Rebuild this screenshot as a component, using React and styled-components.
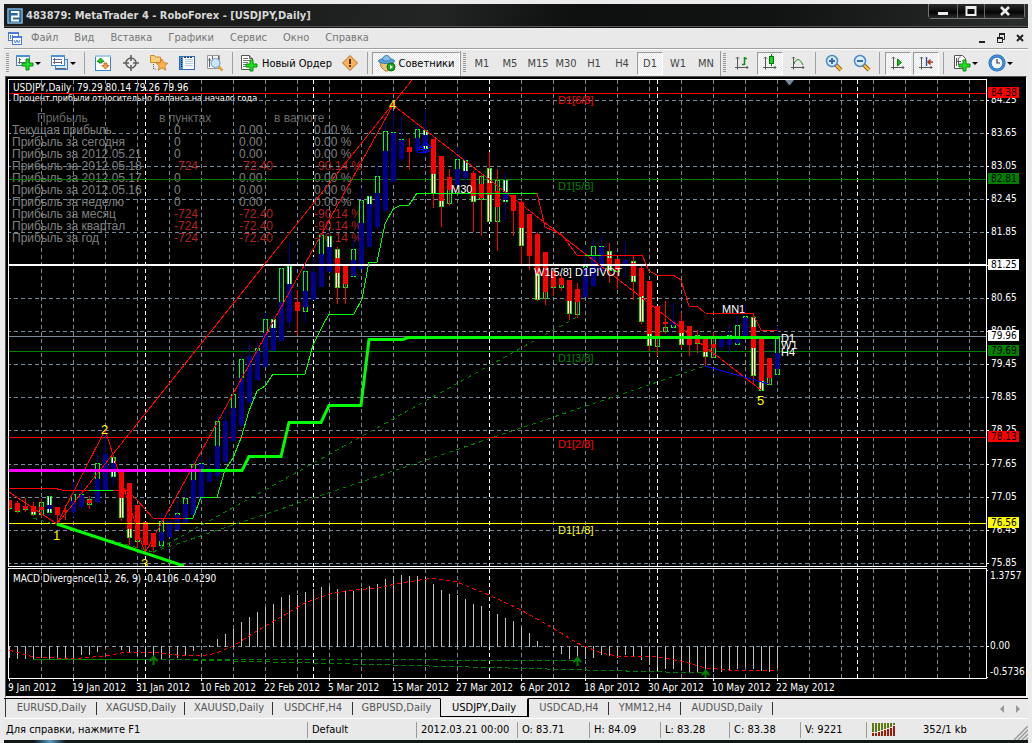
import React from 'react';
import styled, { createGlobalStyle } from 'styled-components';

const UI_FONT = "'DejaVu Sans Condensed', 'DejaVu Sans', sans-serif";
const LABEL_FONT = "'Liberation Sans', sans-serif";

// bar: [candle kind, candle top, candle bottom, trend, body top, body bottom, wick top, wick bottom]
// kind: h hollow, w white, - none; trend: r down, b up
const BARS = `w 500 508 r 500 507 500 509
h 503 511 r 503 510 501 512
h 506 509 r 506 508 498 511
w 507 514 r 506 511 502 515
h 502 514 r 507 509 499 517
w 496 512 b 505 508 495 516
- 0 0 r 507 514 507 525
- 0 0 r 510 511 505 519
h 494 510 b 501 511 482 516
h 494 505 b 495 506 483 508
h 499 504 r 500 502 496 508
h 463 485 b 479 501 453 502
- 0 0 b 454 490 430 490
w 457 476 b 463 470 456 485
w 480 517 r 471 497 471 520
w 500 537 r 483 528 483 544
h 520 541 r 505 539 505 547
- 0 0 r 522 544 522 552
- 0 0 r 533 546 533 552
h 521 545 b 532 540 513 548
- 0 0 b 521 536 515 536
h 513 525 b 515 529 502 529
h 498 520 b 504 523 489 523
h 464 500 b 480 514 460 514
h 463 490 b 464 498 456 498
- 0 0 b 468 481 457 481
h 421 460 b 446 475 413 480
- 0 0 b 421 461 408 461
h 394 420 b 408 440 392 440
h 359 400 b 378 425 355 425
- 0 0 b 356 402 341 402
h 348 370 b 351 379 343 379
h 319 350 b 333 366 313 366
w 319 340 b 328 350 315 350
h 268 320 b 302 340 268 340
w 266 300 b 284 321 242 327
- 0 0 r 302 310 290 334
h 271 311 b 291 306 266 322
h 272 290 b 272 299 257 299
h 235 270 b 254 286 233 286
w 236 260 b 247 271 232 271
w 249 287 r 258 272 247 303
h 270 287 r 266 283 266 303
h 249 276 b 260 275 240 276
h 200 240 b 223 268 188 268
w 196 220 b 204 246 195 246
h 176 210 b 193 226 165 228
h 131 170 b 151 210 122 210
h 132 160 b 133 181 111 181
h 139 150 b 140 158 117 160
- 0 0 r 147 151 138 169
h 129 145 b 138 150 123 150
w 130 148 b 135 145 109 153
w 160 193 r 139 173 139 207
w 180 206 r 156 200 156 226
h 180 203 r 177 189 169 205
h 159 175 b 169 184 148 184
w 160 173 b 171 177 157 183
w 180 201 r 173 195 171 231
h 176 199 r 184 197 175 235
w 168 221 r 183 194 152 221
h 180 221 r 191 206 169 250
w 180 201 b 192 199 173 220
- 0 0 r 195 210 195 235
w 210 245 r 202 227 200 263
- 0 0 r 214 255 214 269
w 250 299 r 234 273 232 300
h 270 298 r 252 291 252 304
h 275 287 r 271 286 271 295
h 283 287 r 278 284 275 290
w 290 313 r 280 300 280 319
h 292 314 r 289 301 283 317
h 266 280 b 268 296 247 296
h 246 265 b 255 285 239 285
h 246 255 b 247 270 236 270
w 251 270 r 258 265 243 282
h 262 271 r 259 269 259 288
- 0 0 b 260 265 241 277
w 261 281 r 263 275 256 299
w 280 321 r 268 295 265 323
w 310 345 r 281 333 281 350
h 320 346 r 306 336 306 355
h 327 331 r 322 323 301 333
h 324 327 b 321 324 303 330
w 325 344 r 321 332 313 347
- 0 0 r 326 344 326 355
h 335 343 r 336 342 330 352
w 345 356 r 339 351 339 366
h 337 357 r 344 347 333 357
- 0 0 b 339 346 335 350
h 335 344 b 339 344 324 353
h 325 344 b 337 342 316 345
h 316 330 b 318 337 304 337
w 317 375 r 327 347 313 383
w 370 390 r 338 380 338 390
h 370 384 r 358 377 358 384
h 337 374 b 353 368 326 377`.split('\n').map((row) => row.split(' '));

const MACD = [
  657, 658, 658, 658, 657, 659, 657, 658, 658, 654, 654, 651, 647, 646, 649, 652, 655, 654, 658, 658,
  657, 657, 654, 650, 646, 645, 639, 634, 629, 622, 617, 612, 607, 604, 597, 595, 595, 592, 589, 587,
  586, 589, 591, 591, 588, 586, 584, 579, 576, 575, 576, 576, 577, 584, 590, 594, 595, 599, 604, 606,
  612, 614, 618, 621, 627, 633, 641, 646, 650, 653, 658, 660, 658, 657, 654, 655, 657, 654, 656, 659,
  664, 666, 668, 668, 669, 671, 671, 673, 671, 671, 670, 668, 666, 668, 670, 671, 667,
];

const PRICES = [
  ['84.25', 100], ['83.65', 133], ['83.05', 166], ['82.45', 199], ['81.85', 232], ['81.25', 265],
  ['80.65', 298], ['80.05', 331], ['79.45', 364], ['78.85', 397], ['78.25', 430], ['77.65', 464],
  ['77.05', 497], ['76.45', 530], ['75.85', 563],
];

const TAGS = [
  ['84.38', 93, '#ff0000', '#000'],
  ['82.81', 179, '#008000', '#000'],
  ['81.25', 265, '#fff', '#000'],
  ['79.96', 336, '#fff', '#000'],
  ['79.69', 351, '#008000', '#000'],
  ['78.13', 437, '#ff0000', '#000'],
  ['76.56', 523, '#ffff00', '#000'],
];

const PROFIT = [
  ['Текущая прибыль', '0', '0.00', '0.00 %'],
  ['Прибыль за сегодня', '0', '0.00', '0.00 %'],
  ['Прибыль за 2012.05.21', '0', '0.00', '0.00 %'],
  ['Прибыль за 2012.05.18', '-724', '-72.40', '-90.14 %'],
  ['Прибыль за 2012.05.17', '0', '0.00', '0.00 %'],
  ['Прибыль за 2012.05.16', '0', '0.00', '0.00 %'],
  ['Прибыль за неделю', '0', '0.00', '0.00 %'],
  ['Прибыль за месяц', '-724', '-72.40', '-90.14 %'],
  ['Прибыль за квартал', '-724', '-72.40', '-90.14 %'],
  ['Прибыль за год', '-724', '-72.40', '-90.14 %'],
];

const DATES = [
  '9 Jan 2012', '19 Jan 2012', '31 Jan 2012', '10 Feb 2012', '22 Feb 2012', '5 Mar 2012', '15 Mar 2012',
  '27 Mar 2012', '6 Apr 2012', '18 Apr 2012', '30 Apr 2012', '10 May 2012', '22 May 2012',
];

const MENU = ['Файл', 'Вид', 'Вставка', 'Графики', 'Сервис', 'Окно', 'Справка'];
const FRAMES = ['M1', 'M5', 'M15', 'M30', 'H1', 'H4', 'D1', 'W1', 'MN'];
const TABS = [
  ['EURUSD,Daily', 92], ['XAGUSD,Daily', 88], ['XAUUSD,Daily', 88], ['USDCHF,H4', 80], ['GBPUSD,Daily', 87],
  ['USDJPY,Daily', 89], ['USDCAD,H4', 80], ['YMM12,H4', 72], ['AUDUSD,Daily', 92],
];
const STATUS = [
  ['Default', 109], ['2012.03.21 00:00', 101], ['O: 83.71', 72], ['H: 84.09', 71], ['L: 83.28', 69],
  ['C: 83.38', 71], ['V: 9221', 66],
];

const SEPARATORS = [145, 313, 489, 657, 857];
const columns = Array.from({ length: 120 }, (_, i) => 41 + i * 32);

const Columns = ({ top, bottom }) => (
  <g strokeDasharray="4 3" shapeRendering="crispEdges">
    {columns.map((x) => (
      <line key={x} x1={x + 0.5} x2={x + 0.5} y1={top} y2={bottom} stroke="#778899" />
    ))}
    {SEPARATORS.map((x) => (
      <line key={x} x1={x + 0.5} x2={x + 0.5} y1={top} y2={bottom} stroke="#fff" />
    ))}
  </g>
);

const Level = ({ y, color, width = 1 }) => (
  <line x1="0" x2="4000" y1={y} y2={y} stroke={color} strokeWidth={width} />
);

const Bar = ({ bar, index }) => {
  const [kind, ct, cb, trend, bt, bb, wt, wb] = bar;
  const x = 9 + index * 8;
  const color = trend === 'r' ? '#ff0000' : '#00008b';
  return (
    <g>
      {kind !== '-' && (
        <rect
          x={x - 1.5}
          y={+ct + 0.5}
          width="4"
          height={Math.max(cb - ct, 1)}
          fill={kind === 'w' ? '#fff' : '#000'}
          stroke="#00ff00"
        />
      )}
      <rect x={x} y={wt} width="1" height={wb - wt + 1} fill={color} />
      <rect x={x - 2} y={bt} width="5" height={bb - bt + 1} fill={color} />
    </g>
  );
};

const PriceChart = () => (
  <PlotSvg $h={486}>
    <g transform="translate(-9 -80)">
      <Columns top={80} bottom={566} />
      <g strokeDasharray="4 3" shapeRendering="crispEdges">
        {PRICES.map(([p, y]) => <Level key={p} y={y + 0.5} color="#778899" />)}
      </g>
      <g shapeRendering="crispEdges">
        <Level y={93.5} color="#ff0000" />
        <Level y={179.5} color="#008000" />
        <Level y={336.5} color="#778899" />
        <Level y={351.5} color="#008000" />
        <Level y={437.5} color="#ff0000" />
        {BARS.map((bar, i) => <Bar key={i} bar={bar} index={i} />)}
        <Level y={265} color="#fff" width={2} />
        <Level y={523.5} color="#ffff00" />
      </g>
      <g fill="none" shapeRendering="crispEdges">
        <g stroke="#ff0000">
          <path d="M9 492L57 524L105 430L145 553L393 105L761 390" />
          <path d="M57 524L412 80" />
          <path d="M9 488H53L62 490H127L137 500L153 518H185" />
          <path d="M537 193L545 227L561 234L577 255H642L649 271L657 275H673L681 280L689 306H697L705 313L753 314L761 330L777 331" />
        </g>
        <path
          d="M89 490H113M585 255H601M185 518H193L201 497H217L225 470L233 458L241 438L249 411L257 391L265 386L273 374H305L313 345L323 325L329 314H354L362 299L369 262H377L385 224L393 209L401 205H409L417 193H537"
          stroke="#00ff00"
        />
        <path d="M33 518L57 525L153 552M153 552L577 317M153 552L705 366" stroke="#008000" strokeDasharray="4 4" />
        <path d="M705 366L737 375L769 384" stroke="#0000ff" />
        <path d="M417 149h9v3h-9zM425 142l-5 5h3v4h5v-4h3z" stroke="#0000ff" />
      </g>
      <g fill="none" strokeWidth="3">
        <path d="M9 470.5H201" stroke="#ff00ff" />
        <path
          d="M201 470.5H242L249 456.5H281L289 422.5H321L329 405.5H361L369 339.5H403L408 337.5H780M57 524L184 566"
          stroke="#00ff00"
        />
      </g>
      <path d="M785 80h9l-4 5h-1z" fill="#778899" />
      <g fontFamily={LABEL_FONT} fontSize="11">
        <g fill="#ff0000">
          <text x="558" y="104">D1[6/8]</text>
          <text x="558" y="448">D1[2/8]</text>
        </g>
        <g fill="#008000">
          <text x="558" y="190">D1[5/8]</text>
          <text x="558" y="362">D1[3/8]</text>
        </g>
        <g fill="#fff">
          <text x="451" y="193">M30</text>
          <text x="534" y="276">W1[5/8] D1PIVOT</text>
          <text x="722" y="313">MN1</text>
          <text x="781" y="342">D1</text>
          <text x="781" y="349">W1</text>
          <text x="781" y="356">H4</text>
        </g>
        <g fill="#ffff00">
          <text x="558" y="534">D1[1/8]</text>
        </g>
      </g>
      <g fontFamily={LABEL_FONT} fontSize="13" fill="#ffff00">
        <text x="53" y="540">1</text>
        <text x="101" y="434">2</text>
        <text x="141" y="568">3</text>
        <text x="389" y="109">4</text>
        <text x="757" y="405">5</text>
      </g>
    </g>
  </PlotSvg>
);

const MacdChart = () => (
  <PlotSvg $h={109}>
    <g transform="translate(-9 -569)">
      <g shapeRendering="crispEdges">
        <Columns top={569} bottom={678} />
        <g strokeDasharray="4 3"><Level y={646.5} color="#778899" /></g>
        {MACD.map((y, i) => (
          <rect key={i} x={9 + i * 8} y={Math.min(y, 646)} width="1" height={Math.abs(y - 646) + 1} fill="#c0c0c0" />
        ))}
        <g fill="none">
          <path
            d="M9 650L33 657L57 658H81L105 656L121 653L153 652L177 655L201 656L217 653L233 646L257 631L281 617L305 603L329 594L345 591L377 588L401 583L433 578L457 582L489 595L521 610L553 628L577 643L601 653L617 656L657 657L681 661L705 668L729 670H777"
            stroke="#ff0000"
            strokeDasharray="4 3"
          />
          <path d="M33 659.5H153" stroke="#008000" />
          <path d="M153 659L577 660.5M153 659L705 673" stroke="#008000" strokeDasharray="5 3" />
        </g>
      </g>
      {[[153, 655], [577, 656], [705, 669]].map(([x, y]) => (
        <path key={x} d={`M${x + 0.5} ${y}l4 5v2l-3 -2v5h-2v-5l-3 2v-2z`} fill="#008000" />
      ))}
    </g>
  </PlotSvg>
);

const PriceScale = () => (
  <ScaleSvg $h={488}>
    <g transform="translate(-987 -79)" fontFamily={UI_FONT} fontSize="10">
      {PRICES.map(([p, y]) => (
        <g key={p}>
          <rect x="987" y={y} width="2" height="1" fill="#fff" />
          <text x="991" y={y + 3} fill="#fff">{p}</text>
        </g>
      ))}
      {TAGS.map(([p, y, bg, fg]) => (
        <g key={p}>
          <rect x="988" y={y - 6} width="31" height="11" fill={bg} />
          <text x="991" y={y + 3} fill={fg}>{p}</text>
        </g>
      ))}
    </g>
  </ScaleSvg>
);

const MacdScale = () => (
  <ScaleSvg $h={111}>
    <g transform="translate(-987 -568)" fontFamily={UI_FONT} fontSize="10" fill="#fff">
      <path d="M987 570h1v1h-1zM987 646h2v1h-2zM987 677h1v1h-1z" />
      <text x="990" y="579">1.3757</text>
      <text x="990" y="649">0.00</text>
      <text x="990" y="675">-0.5736</text>
    </g>
  </ScaleSvg>
);

/* toolbar pictures */

const Plus = ({ x, y }) => (
  <path
    d={`M${x + 4} ${y}h3v4h4v3h-4v4h-3v-4h-4v-3h4z`}
    fill="#22e022"
    stroke="#0a8a0a"
    strokeWidth="1"
  />
);

const NewChartIcon = () => (
  <Icon viewBox="0 0 18 18">
    <rect x="0.5" y="1.5" width="13" height="10" fill="#fff" stroke="#3b82c4" />
    <path d="M0 1h14v2H0z" fill="#4b93d4" />
    <path d="M3.5 4v6M2 8.5h9M3 5.5h2" stroke="#667" fill="none" />
    <Plus x={6} y={5} />
  </Icon>
);

const ProfilesIcon = () => (
  <Icon viewBox="0 0 18 18">
    <rect x="4.5" y="5.5" width="12" height="10" fill="#d8e8f8" stroke="#3b82c4" />
    <rect x="0.5" y="1.5" width="13" height="10" fill="#fff" stroke="#3b82c4" />
    <path d="M0 1h14v2H0z" fill="#4b93d4" />
    <path d="M3.5 4v6M2 5.5h9M2 8.5h9M10.5 7v3M5 14.5h10" stroke="#667" fill="none" />
  </Icon>
);

const MarketIcon = () => (
  <Icon viewBox="0 0 18 18">
    <rect x="1.5" y="1.5" width="15" height="15" fill="#fff" stroke="#3b82c4" />
    <path d="M1 1h16v2H1z" fill="#a5cbee" />
    <path d="M6.500 4l3.500 3.500H8V9H5V7.500H3z" fill="#28c828" stroke="#0a7a0a" strokeWidth="0.8" />
    <path d="M11.500 15l3.500-3.500h-2V9h-3v2.500H8z" fill="#f5a040" stroke="#b06010" strokeWidth="0.8" />
  </Icon>
);

const CrosshairIcon = () => (
  <Icon viewBox="0 0 18 18" fill="none" stroke="#606060">
    <circle cx="9" cy="9" r="5" strokeWidth="1.6" />
    <path d="M9 1v6M9 11v6M1 9h6M11 9h6" strokeWidth="1.6" />
  </Icon>
);

const NavigatorIcon = () => (
  <Icon viewBox="0 0 18 18">
    <path d="M0.500 8.500v-7h4l1 1.500h5v5.500z" fill="#f7cf7a" stroke="#c88a28" />
    <path d="M3.500 10v5h3" stroke="#555" fill="none" strokeDasharray="1 1" />
    <path d="M12 5l1.800 3.800 4 .4-3 2.800 1 4.200-3.800-2.200-3.800 2.200 1-4.200-3-2.800 4-.4z" fill="#fbb14c" stroke="#c07820" strokeWidth="0.8" />
  </Icon>
);

const DataIcon = () => (
  <Icon viewBox="0 0 18 18">
    <rect x="1.5" y="2.5" width="15" height="13" fill="#fff" stroke="#2b6cb8" />
    <path d="M2 3h3v12H2z" fill="#4a90d8" />
    <path d="M3 4.500h1M3 6.500h1M3 8.500h1M3 10.500h1M3 12.500h1" stroke="#124" />
    <path d="M7 5.500h8M7 7.500h8M7 9.500h8M7 11.500h8" stroke="#b5cde8" />
    <path d="M6 3.500h9" stroke="#333" strokeDasharray="2 1" />
  </Icon>
);

const TesterIcon = () => (
  <Icon viewBox="0 0 18 18">
    <path d="M1.500 1.500h12v13h-12z" fill="#f5f5f5" stroke="#999" />
    <path d="M3.500 4v9M2 6h3M6.500 2v6M12.500 2v4" stroke="#666" fill="none" />
    <path d="M12.500 12.500l4 4" stroke="#e0a040" strokeWidth="2.5" />
    <circle cx="9.5" cy="9" r="4.5" fill="#c8e4f8" fillOpacity="0.9" stroke="#6a9cc8" />
  </Icon>
);

const OrderIcon = () => (
  <Icon viewBox="0 0 18 18">
    <path d="M0.500 1.500h8l3 3v11h-11z" fill="#fff" stroke="#555" />
    <path d="M8.500 1.500v3h3" fill="#ccc" stroke="#555" />
    <path d="M2 4.500h5M2 6.500h8M2 8.500h5M2 10.500h3M2 12.500h3" stroke="#777" />
    <Plus x={5} y={6} />
  </Icon>
);

const MetaEditorIcon = () => (
  <Icon viewBox="0 0 18 18">
    <path d="M9 1.500L16.500 9 9 16.500 1.500 9z" fill="#f4b25c" stroke="#b8741c" strokeLinejoin="round" />
    <path d="M8 5h2v5H8zM8 11h2v2H8z" fill="#5a3206" />
  </Icon>
);

const ExpertIcon = () => (
  <Icon viewBox="0 0 18 18">
    <path d="M2 8h13l-1 5-4 4H7l-4-4z" fill="#f0c078" stroke="#b8803a" />
    <ellipse cx="8.5" cy="7" rx="8" ry="2.5" fill="#5aa4dc" stroke="#3a78b0" />
    <path d="M4.500 6c0-6 8-6 8 0-2 1.500-6 1.500-8 0z" fill="#84c0ec" stroke="#3a78b0" />
    <circle cx="13" cy="13" r="4" fill="#18a818" stroke="#0a7010" />
    <path d="M12 11l3 2-3 2z" fill="#fff" />
  </Icon>
);

const Axes = ({ children }) => (
  <Icon viewBox="0 0 18 18" fill="none" stroke="#585858">
    <path d="M4.500 3v12.500M2 13.500h13M3 4.500l1.500-1.500 1.500 1.500M13.500 12l1.500 1.500-1.500 1.500" />
    {children}
  </Icon>
);

const ZoomIcon = ({ plus }) => (
  <Icon viewBox="0 0 18 18">
    <path d="M11 11l5 5" stroke="#a06818" strokeWidth="4" />
    <path d="M11 11l5 5" stroke="#f8c050" strokeWidth="2" />
    <circle cx="7" cy="7" r="5.5" fill="#d8ecfc" stroke="#4a88c8" strokeWidth="1.5" />
    <path d={plus ? 'M4 7h6M7 4v6' : 'M4 7h6'} stroke="#3468b0" strokeWidth="2" />
  </Icon>
);

const TemplateIcon = () => (
  <Icon viewBox="0 0 18 18">
    <path d="M1.500 1.500h8l3 3v10h-11z" fill="#fff" stroke="#555" />
    <path d="M3.500 4v8M7.500 3c-3 0-2 3-2 8M4 7.500h4" stroke="#555" fill="none" />
    <Plus x={6} y={6} />
  </Icon>
);

const ClockIcon = () => (
  <Icon viewBox="0 0 18 18">
    <circle cx="9" cy="9" r="7" fill="#f4f9ff" stroke="#1c5494" strokeWidth="3" />
    <circle cx="9" cy="9" r="7" fill="none" stroke="#3a90e0" strokeWidth="2" />
    <path d="M9 5v4h3" fill="none" stroke="#333" strokeWidth="1.2" />
  </Icon>
);

const App = () => (
  <>
    <GlobalStyle />
    <Window>
      <TitleBar>
        <Logo viewBox="0 0 16 16">
          <rect width="16" height="16" rx="1" fill="#2c6494" />
          <rect x="1" y="1" width="14" height="14" fill="none" stroke="#9cc4e0" />
          <path d="M4 4h7.500v4.500H5V12.500H12" fill="none" stroke="#fff" strokeWidth="1.8" />
        </Logo>
        <Title>483879: MetaTrader 4 - RoboForex - [USDJPY,Daily]</Title>
        <Caption>
          <CaptionButton $w={28} aria-label="Свернуть">
            <svg width="12" height="12"><path d="M1 7h10v3H1z" fill="#eee" /></svg>
          </CaptionButton>
          <CaptionButton $w={27} aria-label="Развернуть">
            <svg width="12" height="12"><path d="M1.500 2h9v8h-9zM1 3h10" fill="none" stroke="#eee" strokeWidth="2" /></svg>
          </CaptionButton>
          <CaptionButton $w={40} aria-label="Закрыть">
            <svg width="12" height="12"><path d="M2 2l8 8M10 2l-8 8" stroke="#eee" strokeWidth="2.5" /></svg>
          </CaptionButton>
        </Caption>
      </TitleBar>

      <MenuBar>
        <MenuLogo viewBox="0 0 15 15" fill="none" stroke="#4a78d8">
          <rect x="0.5" y="1.5" width="10" height="8" fill="#fff" />
          <path d="M1 2.500h9M2.500 4v4M4.500 4v3M6.500 5v3" />
          <rect x="4.5" y="5.5" width="9" height="8" fill="#fff" />
          <path d="M5 6.500h8M6 9l1.500 3L9 9l1.500 3L12 9" />
        </MenuLogo>
        {MENU.map((item) => <MenuItem key={item}>{item}</MenuItem>)}
        <MdiControls>
          <MdiButton aria-label="Свернуть окно">
            <svg width="10" height="10"><path d="M2 8h6v2H2z" fill="#222" /></svg>
          </MdiButton>
          <MdiButton aria-label="Восстановить окно">
            <svg width="10" height="10" fill="none" stroke="#222">
              <path d="M3 1h6M1 5h6" strokeWidth="2" />
              <path d="M3.500 1v3M8.500 1v5.500H7M1.500 5v4.500h5V5" />
            </svg>
          </MdiButton>
          <MdiButton aria-label="Закрыть окно">
            <svg width="10" height="10"><path d="M2 2l6 6M8 2l-6 6" stroke="#222" strokeWidth="2" /></svg>
          </MdiButton>
        </MdiControls>
      </MenuBar>

      <Toolbar>
        <Grip />
        <DropButton aria-label="Новый график"><NewChartIcon /><Caret /></DropButton>
        <DropButton aria-label="Профили"><ProfilesIcon /><Caret /></DropButton>
        <Divider />
        <ToolButton aria-label="Обзор рынка"><MarketIcon /></ToolButton>
        <ToolButton aria-label="Перекрестие"><CrosshairIcon /></ToolButton>
        <ToolButton aria-label="Навигатор"><NavigatorIcon /></ToolButton>
        <ToolButton aria-label="Терминал"><DataIcon /></ToolButton>
        <ToolButton aria-label="Тестер"><TesterIcon /></ToolButton>
        <Divider />
        <WideButton $w={99}><OrderIcon />Новый Ордер</WideButton>
        <ToolButton aria-label="MetaEditor"><MetaEditorIcon /></ToolButton>
        <Divider />
        <WideButton $w={88} $on><ExpertIcon />Советники</WideButton>
        <Edge />
        <Grip />
        {FRAMES.map((f) => <ToolButton key={f} $on={f === 'D1'}>{f}</ToolButton>)}
        <Edge />
        <Grip />
        <ToolButton aria-label="Бары">
          <Axes><path d="M11.500 3v8M9 10.500h2.500M11.500 4.500H14" stroke="#128a12" strokeWidth="1.5" /></Axes>
        </ToolButton>
        <ToolButton $on aria-label="Свечи">
          <Axes>
            <path d="M10.500 0v12" stroke="#0a7a0a" />
            <rect x="8.5" y="2.5" width="4" height="7" fill="#22d022" stroke="#0a7a0a" />
          </Axes>
        </ToolButton>
        <ToolButton aria-label="Линия">
          <Axes><path d="M5 10c2-6 6-6 9 1" stroke="#128a12" /></Axes>
        </ToolButton>
        <Divider />
        <ToolButton aria-label="Приблизить"><ZoomIcon plus /></ToolButton>
        <ToolButton aria-label="Отдалить"><ZoomIcon /></ToolButton>
        <Divider />
        <ToolButton $on aria-label="Автопрокрутка">
          <Axes><path d="M8.500 5v7l4-3.500z" fill="#22c022" stroke="#0a7a0a" /></Axes>
        </ToolButton>
        <ToolButton $on aria-label="Сдвиг графика">
          <Axes>
            <path d="M9.500 3v9" stroke="#2858a8" strokeWidth="1.5" />
            <path d="M16 8h-4M13.500 5.500L11 8l2.500 2.500" stroke="#b03010" strokeWidth="1.5" />
          </Axes>
        </ToolButton>
        <Divider />
        <DropButton aria-label="Шаблоны"><TemplateIcon /><Caret /></DropButton>
        <DropButton aria-label="Периоды"><ClockIcon /><Caret /></DropButton>
      </Toolbar>

      <Chart>
        <Plot>
          <Overlay>
            <Quote>USDJPY,Daily&nbsp; 79.29 80.14 79.26 79.96</Quote>
            <Note>Процент прибыли относительно баланса на начало года</Note>
            <ProfitTable>
              <thead>
                <tr>
                  <Head $w={147} $pad={25}>Прибыль</Head>
                  <Head $w={80}>в пунктах</Head>
                  <Head $w={35} aria-label="сумма" />
                  <Head $w={90}>в валюте</Head>
                </tr>
              </thead>
              <tbody>
                {PROFIT.map(([label, points, money, percent]) => (
                  <tr key={label}>
                    <Cell>{label}</Cell>
                    <Cell $loss={points[0] === '-'} $pad={15}>{points}</Cell>
                    <Cell $loss={points[0] === '-'}>{money}</Cell>
                    <Cell $loss={points[0] === '-'} $pad={40}>{percent}</Cell>
                  </tr>
                ))}
              </tbody>
            </ProfitTable>
          </Overlay>
          <PriceChart />
        </Plot>
        <PriceScale />
        <Plot>
          <Overlay $top={5}>
            <Quote>MACD Divergence(12, 26, 9) -0.4106 -0.4290</Quote>
          </Overlay>
          <MacdChart />
        </Plot>
        <MacdScale />
        <TimeScale>
          {DATES.map((d) => <DateLabel key={d}>{d}</DateLabel>)}
        </TimeScale>
      </Chart>

      <TabBar>
        {TABS.map(([name, w]) => (
          <Tab key={name} $w={w} $active={name === 'USDJPY,Daily'} $last={name === 'GBPUSD,Daily'}>{name}</Tab>
        ))}
        <Scrollers>
          <ScrollButton aria-label="Назад"><svg width="6" height="8"><path d="M5 0v8L1 4z" fill="#999" /></svg></ScrollButton>
          <ScrollButton aria-label="Вперёд"><svg width="6" height="8"><path d="M1 0v8l4-4z" fill="#999" /></svg></ScrollButton>
        </Scrollers>
      </TabBar>

      <StatusBar>
        <StatusHint>Для справки, нажмите F1</StatusHint>
        {STATUS.map(([text, w]) => <StatusCell key={text} $w={w}>{text}</StatusCell>)}
        <Traffic>
          <svg width="24" height="13">
            {[9, 9, 8, 7, 6, 5, 4, 2].map((h, i) => (
              <g key={i}>
                <rect x={i * 3} y="0" width="2" height={h} fill="#5c7a10" />
                <rect x={i * 3} y={h + 1} width="2" height={12 - h} fill="#9c1c08" />
              </g>
            ))}
          </svg>
          352/1 kb
        </Traffic>
        <Resize width="14" height="14" stroke="#999">
          <path d="M0 14L14 0M4 14L14 4M8 14l6-6M12 14l2-2" strokeWidth="1.5" />
        </Resize>
      </StatusBar>
      <Desktop />
    </Window>
  </>
);

export default App;

const GlobalStyle = createGlobalStyle`
  * {
    box-sizing: border-box;
  }
  body {
    margin: 0;
    background: #ebebeb;
    font-family: ${UI_FONT};
    font-size: 11px;
    color: #1a1a1a;
    white-space: nowrap;
  }
  button {
    margin: 0;
    padding: 0;
    border: 0;
    background: none;
    font: inherit;
    color: inherit;
  }
  svg {
    display: block;
    flex: none;
  }
`;

const Window = styled.div`
  display: flex;
  flex-direction: column;
  padding: 4px 4px 0;
  overflow: hidden;
`;

const TitleBar = styled.header`
  display: flex;
  align-items: center;
  height: 24px;
  padding-left: 3px;
  background: linear-gradient(100deg, #191b1c 0%, #1a1c1c 20%, #232525 42%, #0e0f0f 56%, #111212 75%, #2b2e2e 100%);
  border-bottom: 1px solid #141414;
  box-shadow: inset 0 -1px #555;
`;

const Logo = styled.svg`
  width: 16px;
  height: 16px;
`;

const Title = styled.h1`
  margin: 0 0 0 3px;
  flex: 1;
  font-size: 11px;
  line-height: 16px;
  color: #d8d8d8;
`;

const Caption = styled.div`
  display: flex;
  align-self: flex-start;
  height: 15px;
  margin-right: 3px;
  border: 1px solid #777;
  border-top: 0;
  border-radius: 0 0 4px 4px;
`;

const CaptionButton = styled.button`
  display: flex;
  align-items: center;
  justify-content: center;
  width: ${props => props.$w}px;
  background: linear-gradient(#2c2c2c, #050505 60%, #2c2c2c);
  & + & {
    border-left: 1px solid #666;
  }
`;

const MenuBar = styled.nav`
  display: flex;
  align-items: center;
  height: 21px;
  padding-left: 4px;
  background: #e9e9e9;
  border-bottom: 1px solid #a0a0a0;
`;

const MenuLogo = styled.svg`
  width: 15px;
  height: 15px;
`;

const MenuItem = styled.button`
  padding: 0 8px;
  line-height: 16px;
  color: #777;
`;

const MdiControls = styled.div`
  display: flex;
  gap: 9px;
  margin: 0 3px 0 auto;
`;

const MdiButton = styled.button`
  width: 10px;
  height: 10px;
`;

const Toolbar = styled.div`
  display: flex;
  align-items: center;
  height: 27px;
  overflow: hidden;
  background: #e9e9e9;
  border-top: 1px solid #fff;
  color: #444;
`;

const Grip = styled.i`
  flex: none;
  width: 3px;
  height: 20px;
  margin: 0 2px;
  background: repeating-linear-gradient(#999 0 1px, transparent 1px 2px);
`;

const Divider = styled.i`
  flex: none;
  width: 1px;
  height: 22px;
  margin: 0 4px 0 3px;
  background: #a0a0a0;
`;

const Edge = styled.i`
  flex: none;
  width: 1px;
  height: 25px;
  background: #999;
`;

const ToolButton = styled.button`
  display: flex;
  flex: none;
  align-items: center;
  justify-content: center;
  width: 26px;
  height: 23px;
  margin: 0 1px;
  border: 1px solid transparent;
  ${props => props.$on && `
    border-color: #999 #fff #fff #999;
    background: repeating-conic-gradient(#fff 0 25%, #e6e6e6 0 50%) 0 0 / 2px 2px;
  `}
`;

const WideButton = styled(ToolButton)`
  width: ${props => props.$w}px;
  margin: 0;
  gap: 3px;
  color: #000;
`;

const DropButton = styled(ToolButton)`
  width: 32px;
  margin-right: 2px;
  gap: 1px;
`;

const Caret = styled.i`
  border: 3px solid transparent;
  border-top-color: #000;
  border-bottom: 0;
`;

const Icon = styled.svg`
  width: 18px;
  height: 18px;
`;

const Chart = styled.main`
  display: grid;
  grid-template-columns: minmax(0, 1fr) 39px;
  margin: 0 1px;
  padding: 2px 0 0 2px;
  background: #000;
  border: 1px solid #555;
  border-right-color: #fff;
  border-bottom: 2px solid #f4eef2;
`;

const Plot = styled.section`
  position: relative;
  border: 1px solid #fff;
  & ~ & {
    margin-top: 1px;
  }
`;

const Overlay = styled.div`
  position: absolute;
  inset: 0;
  padding: ${props => props.$top || 3}px 0 0 4px;
`;

const Quote = styled.div`
  font-size: 10px;
  line-height: 10px;
  color: #fff;
`;

const Note = styled.div`
  font-size: 9px;
  line-height: 10px;
  color: #fff;
`;

const ProfitTable = styled.table`
  margin: 9px 0 0 -1px;
  border-collapse: collapse;
  table-layout: fixed;
  width: 352px;
  font-family: ${LABEL_FONT};
  font-size: 12px;
  line-height: 12px;
`;

const Head = styled.th`
  width: ${props => props.$w}px;
  padding: 0 0 0 ${props => props.$pad || 0}px;
  font-weight: 400;
  text-align: left;
  color: #696969;
`;

const Cell = styled.td`
  padding: 0 0 0 ${props => props.$pad || 0}px;
  color: ${props => (props.$loss ? '#b22222' : '#808080')};
`;

const PlotSvg = styled.svg`
  position: relative;
  width: 100%;
  height: ${props => props.$h}px;
  overflow: hidden;
`;

const ScaleSvg = styled.svg`
  width: 39px;
  height: ${props => props.$h}px;
  align-self: end;
`;

const TimeScale = styled.div`
  display: flex;
  grid-column: 1 / -1;
  height: 17px;
  overflow: hidden;
`;

const DateLabel = styled.span`
  flex: none;
  width: 64px;
  padding-top: 3px;
  font-size: 10px;
  line-height: 12px;
  color: #fff;
  background: linear-gradient(#fff, #fff) 1px 0 / 1px 2px no-repeat;
`;

const TabBar = styled.nav`
  display: flex;
  height: 21px;
  padding-left: 1px;
  background: #e9e9e9;
  border-top: 1px solid #000;
  border-bottom: 1px solid #fff;
  color: #555;
`;

const Tab = styled.button`
  flex: none;
  width: ${props => props.$w}px;
  height: 18px;
  line-height: 16px;
  background: ${props => (props.$last
    ? 'none'
    : 'linear-gradient(#333, #333) 100% 3px / 1px 13px no-repeat')};
  ${props => props.$active && `
    height: 19px;
    margin-top: -1px;
    padding-top: 1px;
    background: #ececec;
    border: 1px solid #000;
    border-top-color: #ececec;
    border-right-width: 2px;
    color: #000;
  `}
  &:first-child {
    border-left: 1px solid #333;
  }
`;

const Scrollers = styled.div`
  display: flex;
  align-items: center;
  gap: 10px;
  margin: 0 7px 0 auto;
`;

const ScrollButton = styled.button`
  width: 6px;
  height: 8px;
`;

const StatusBar = styled.footer`
  display: flex;
  align-items: center;
  height: 21px;
  padding-left: 2px;
  background: #e9e9e9;
  color: #000;
`;

const StatusHint = styled.span`
  width: 301px;
`;

const StatusCell = styled.span`
  flex: none;
  width: ${props => props.$w}px;
  padding-left: 4px;
  line-height: 16px;
  border-left: 1px solid #999;
`;

const Traffic = styled.span`
  display: flex;
  flex: 1;
  align-items: center;
  gap: 27px;
  height: 16px;
  padding-left: 5px;
  border-left: 1px solid #999;
`;

const Resize = styled.svg`
  align-self: flex-end;
`;

const Desktop = styled.div`
  height: 4px;
  background: linear-gradient(90deg, #101818 0 30px, #5a9cc0 46px, #101818 62px);
`;
